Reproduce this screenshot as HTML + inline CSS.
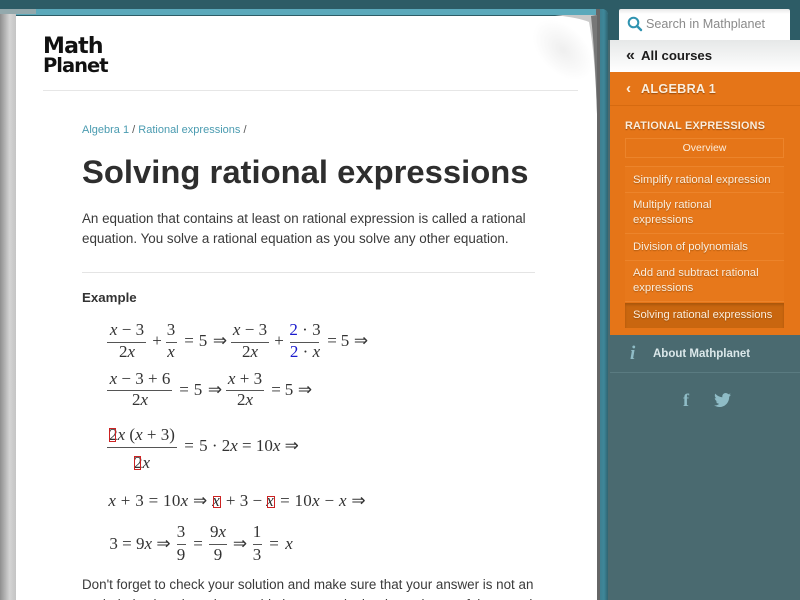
<!DOCTYPE html>
<html><head><meta charset="utf-8"><title>Solving rational expressions</title>
<style>
html,body{margin:0;padding:0;width:800px;height:600px;overflow:hidden}
body{background:#4a6a70;font-family:"Liberation Sans",sans-serif;color:#333}
#w{position:absolute;left:0;top:0;width:800px;height:600px;overflow:hidden}
#w div,#w svg{position:absolute;white-space:nowrap}
a{color:#4a9bb0;text-decoration:none}
.m{position:absolute;transform:translate(-50%,-50%);font:17px/20px "Liberation Serif",serif;color:#333;white-space:pre}
.m i{font-style:italic}
#w .bar{height:1px;background:#555}
#w .box{border:1px solid #c22;box-sizing:border-box}
#w .it{left:625px;width:159px;background:#e7781b;border-bottom:1px solid #ec842b;color:#fbeedd;font-size:11.3px;line-height:15px;box-sizing:border-box;padding:0 0 0 8px;text-shadow:0 1px 1px rgba(120,60,0,.5)}
</style></head><body><div id="w">
<div style="left:0;top:0;width:800px;height:40px;background:#2d5c66"></div>
<div style="left:0;top:9px;width:608px;height:6px;background:#5ba9bb;border-radius:0 6px 0 0"></div>
<div style="left:0;top:9px;width:36px;height:5px;background:#93a9ad"></div>
<div style="left:596px;top:9px;width:12px;height:591px;background:linear-gradient(90deg,#666 0,#666 4px,#3e7f90 4px,#3e8799 8px,#2f6370 12px);border-radius:0 6px 0 0"></div>
<div style="left:0;top:14px;width:16px;height:586px;background:linear-gradient(90deg,#8f8f8f,#d4d4d4 60%,#c4c4c4)"></div>
<div style="left:16px;top:16px;width:581px;height:584px;background:#fff"></div>
<div style="left:530px;top:15px;width:66px;height:70px;background:radial-gradient(closest-side,#efefef,rgba(255,255,255,0));transform:rotate(45deg) scale(1.1,.65)"></div>
<svg style="left:520px;top:14px" width="80" height="110" viewBox="0 0 80 110">
<path d="M35 1 Q60 4 69 8 Q75 40 77 100 L77 1Z" fill="#c9c9c9"/>
<path d="M71 2 L77 1 L77 100 Q75 40 71 2Z" fill="#777"/>
</svg>

<div style="left:43px;top:37px;font:bold 22px/20px 'DejaVu Sans',sans-serif;color:#111;letter-spacing:-.8px">Math</div>
<div style="left:43px;top:56px;font:bold 19.500px/20px 'DejaVu Sans',sans-serif;color:#111;letter-spacing:-1px">Planet</div>
<div style="left:43px;top:90px;width:535px;height:1px;background:#e6e6e6"></div>

<div style="left:82px;top:122px;font-size:11px;line-height:16px;color:#555"><a href="#">Algebra 1</a> / <a href="#">Rational expressions</a> /</div>
<div style="left:82px;top:150px;font-size:32.800px;line-height:44px;font-weight:bold;color:#2e2e2e">Solving rational expressions</div>
<div style="left:82px;top:209px;font-size:13.400px;line-height:20px;color:#3a3a3a">An equation that contains at least on rational expression is called a rational</div>
<div style="left:82px;top:229px;font-size:13.400px;line-height:20px;color:#3a3a3a">equation. You solve a rational equation as you solve any other equation.</div>
<div style="left:82px;top:272px;width:453px;height:1px;background:#e4e4e4"></div>
<div style="left:82px;top:289px;font-size:13.300px;line-height:18px;font-weight:bold;color:#333">Example</div>

<!-- line 1 -->
<span class="m" style="left:127px;top:330px"><i>x</i> − 3</span><div class="bar" style="left:107px;top:342px;width:39px"></div><span class="m" style="left:127px;top:352px">2<i>x</i></span>
<span class="m" style="left:157px;top:341px">+</span>
<span class="m" style="left:171px;top:330px">3</span><div class="bar" style="left:166px;top:342px;width:11px"></div><span class="m" style="left:171px;top:352px"><i>x</i></span>
<span class="m" style="left:189px;top:341px">=</span><span class="m" style="left:203px;top:341px">5</span><span class="m" style="left:220px;top:341px">⇒</span>
<span class="m" style="left:250px;top:330px"><i>x</i> − 3</span><div class="bar" style="left:231px;top:342px;width:38px"></div><span class="m" style="left:250px;top:352px">2<i>x</i></span>
<span class="m" style="left:279px;top:341px">+</span>
<span class="m" style="left:305px;top:330px"><span style="color:#1a1acc">2</span> · 3</span><div class="bar" style="left:290px;top:342px;width:29px"></div><span class="m" style="left:305px;top:352px"><span style="color:#1a1acc">2</span> · <i>x</i></span>
<span class="m" style="left:332px;top:341px">=</span><span class="m" style="left:345px;top:341px">5</span><span class="m" style="left:361px;top:341px">⇒</span>
<!-- line 2 -->
<span class="m" style="left:140px;top:379px"><i>x</i> − 3 + 6</span><div class="bar" style="left:107px;top:390px;width:65px"></div><span class="m" style="left:140px;top:400px">2<i>x</i></span>
<span class="m" style="left:184px;top:390px">=</span><span class="m" style="left:198px;top:390px">5</span><span class="m" style="left:215px;top:390px">⇒</span>
<span class="m" style="left:245px;top:379px"><i>x</i> + 3</span><div class="bar" style="left:226px;top:390px;width:38px"></div><span class="m" style="left:245px;top:400px">2<i>x</i></span>
<span class="m" style="left:276px;top:390px">=</span><span class="m" style="left:289px;top:390px">5</span><span class="m" style="left:305px;top:390px">⇒</span>
<!-- line 3 -->
<span class="m" style="left:142px;top:435px">2<i>x</i> (<i>x</i> + 3)</span><div class="bar" style="left:107px;top:447px;width:70px"></div><span class="m" style="left:142px;top:463px">2<i>x</i></span>
<div class="box" style="left:109px;top:428px;width:7px;height:14px"></div><div class="box" style="left:134px;top:456px;width:7px;height:14px"></div>
<span class="m" style="left:189px;top:446px">=</span><span class="m" style="left:249px;top:446px">5 · 2<i>x</i> = 10<i>x</i> ⇒</span>
<!-- line 4 -->
<span class="m" style="left:158px;top:501px;letter-spacing:.3px"><i>x</i> + 3 = 10<i>x</i> ⇒</span>
<span class="m" style="left:216px;top:501px"><i>x</i></span><div class="box" style="left:213px;top:496px;width:8px;height:12px"></div>
<span class="m" style="left:244px;top:501px">+ 3 −</span>
<span class="m" style="left:270px;top:501px"><i>x</i></span><div class="box" style="left:267px;top:496px;width:8px;height:12px"></div>
<span class="m" style="left:323px;top:501px;letter-spacing:.3px">= 10<i>x</i> − <i>x</i> ⇒</span>
<!-- line 5 -->
<span class="m" style="left:140px;top:544px">3 = 9<i>x</i> ⇒</span>
<span class="m" style="left:181px;top:532px">3</span><div class="bar" style="left:177px;top:544px;width:9px"></div><span class="m" style="left:181px;top:555px">9</span>
<span class="m" style="left:198px;top:544px">=</span>
<span class="m" style="left:218px;top:532px">9<i>x</i></span><div class="bar" style="left:209px;top:544px;width:18px"></div><span class="m" style="left:218px;top:555px">9</span>
<span class="m" style="left:240px;top:544px">⇒</span>
<span class="m" style="left:257px;top:532px">1</span><div class="bar" style="left:253px;top:544px;width:9px"></div><span class="m" style="left:257px;top:555px">3</span>
<span class="m" style="left:274px;top:544px">=</span><span class="m" style="left:289px;top:544px"><i>x</i></span>

<div style="left:82px;top:575px;font-size:13.400px;line-height:20px;color:#3a3a3a">Don't forget to check your solution and make sure that your answer is not an</div>
<div style="left:82px;top:595px;font-size:13.400px;line-height:20px;color:#3a3a3a">excluded value since that would give a zero in the denominator of the equation</div>

<!-- sidebar -->
<div style="left:619px;top:9px;width:171px;height:31px;background:linear-gradient(#e8e8e8,#fff 5px);border-radius:2px 2px 0 0"></div>
<svg style="left:627px;top:16px" width="16" height="16" viewBox="0 0 16 16"><circle cx="6.500" cy="6.500" r="4.800" fill="none" stroke="#2f93b0" stroke-width="2"/><path d="M10 10l4 4" stroke="#2f93b0" stroke-width="2.400" stroke-linecap="round"/></svg>
<div style="left:646px;top:16px;font-size:12.600px;line-height:17px;color:#8a8a8a">Search in Mathplanet</div>
<div style="left:610px;top:40px;width:190px;height:32px;background:linear-gradient(#e6e8e8,#fff)"></div>
<div style="left:626px;top:46px;font-size:16px;line-height:20px;font-weight:bold;color:#222">«</div>
<div style="left:641px;top:47px;font-size:13.200px;line-height:18px;font-weight:bold;color:#1c1c1c">All courses</div>
<div style="left:610px;top:72px;width:190px;height:263px;background:#e57518"></div>
<div style="left:610px;top:105px;width:190px;height:1px;background:#d66a10"></div>
<div style="left:626px;top:80px;font-size:15px;line-height:18px;font-weight:bold;color:#fbeedd">‹</div>
<div style="left:641px;top:80px;font-size:12.600px;line-height:18px;font-weight:bold;color:#fbeedd;letter-spacing:.3px;text-shadow:0 1px 1px rgba(110,50,0,.6)">ALGEBRA 1</div>
<div style="left:625px;top:118px;font-size:10.800px;line-height:16px;font-weight:bold;color:#fbeedd;letter-spacing:.25px;text-shadow:0 1px 1px rgba(110,50,0,.6)">RATIONAL EXPRESSIONS</div>
<div style="left:625px;top:138px;width:159px;height:20px;border:1px solid #ec842b;box-sizing:border-box;text-align:center;font-size:10.500px;line-height:19px;color:#fbeedd">Overview</div>
<div class="it" style="top:166px;height:27px;padding-top:6px;border-top:1px solid #ec842b">Simplify rational expression</div>
<div class="it" style="top:193px;height:41px;padding-top:5px">Multiply rational<br>expressions</div>
<div class="it" style="top:234px;height:27px;padding-top:6px">Division of polynomials</div>
<div class="it" style="top:261px;height:41px;padding-top:5px">Add and subtract rational<br>expressions</div>
<div class="it" style="top:303px;height:25px;padding-top:5px;background:#c9660f;border:0;box-shadow:inset 0 2px 2px rgba(100,50,0,.3);font-size:11.200px">Solving rational expressions</div>

<div style="left:610px;top:335px;width:190px;height:265px;background:#4a6a70"></div>
<div style="left:610px;top:372px;width:190px;height:1px;background:#5a7b81"></div>
<div style="left:630px;top:344px;font:italic bold 19px/20px 'Liberation Serif',serif;color:#8fbcc6">i</div>
<div style="left:653px;top:346px;font-size:11.500px;line-height:16px;font-weight:bold;color:#dbe8ea">About Mathplanet</div>
<div style="left:683px;top:390px;font:bold 18px/20px 'Liberation Serif',serif;color:#8fbcc6">f</div>
<svg style="left:714px;top:393px" width="17" height="14" viewBox="0 0 24 20"><path d="M24 2.400c-.9.4-1.800.7-2.800.8 1-.6 1.800-1.600 2.200-2.700-1 .6-2 1-3.100 1.200C19.300.700 18 0 16.600 0c-2.700 0-4.900 2.200-4.900 4.900 0 .4 0 .8.100 1.100C7.700 5.800 4.100 3.900 1.700.9 1.200 1.600 1 2.500 1 3.400c0 1.700.9 3.200 2.200 4.100-.8 0-1.600-.2-2.200-.6v.1c0 2.400 1.700 4.400 3.900 4.800-.7.200-1.500.2-2.200.1.600 2 2.400 3.400 4.600 3.400C5.600 17.100 3 18 0 17.700 2.200 19.100 4.800 20 7.500 20c9.100 0 14-7.500 14-14v-.6c1-.7 1.800-1.600 2.500-3z" fill="#8fbcc6"/></svg>
</div></body></html>
